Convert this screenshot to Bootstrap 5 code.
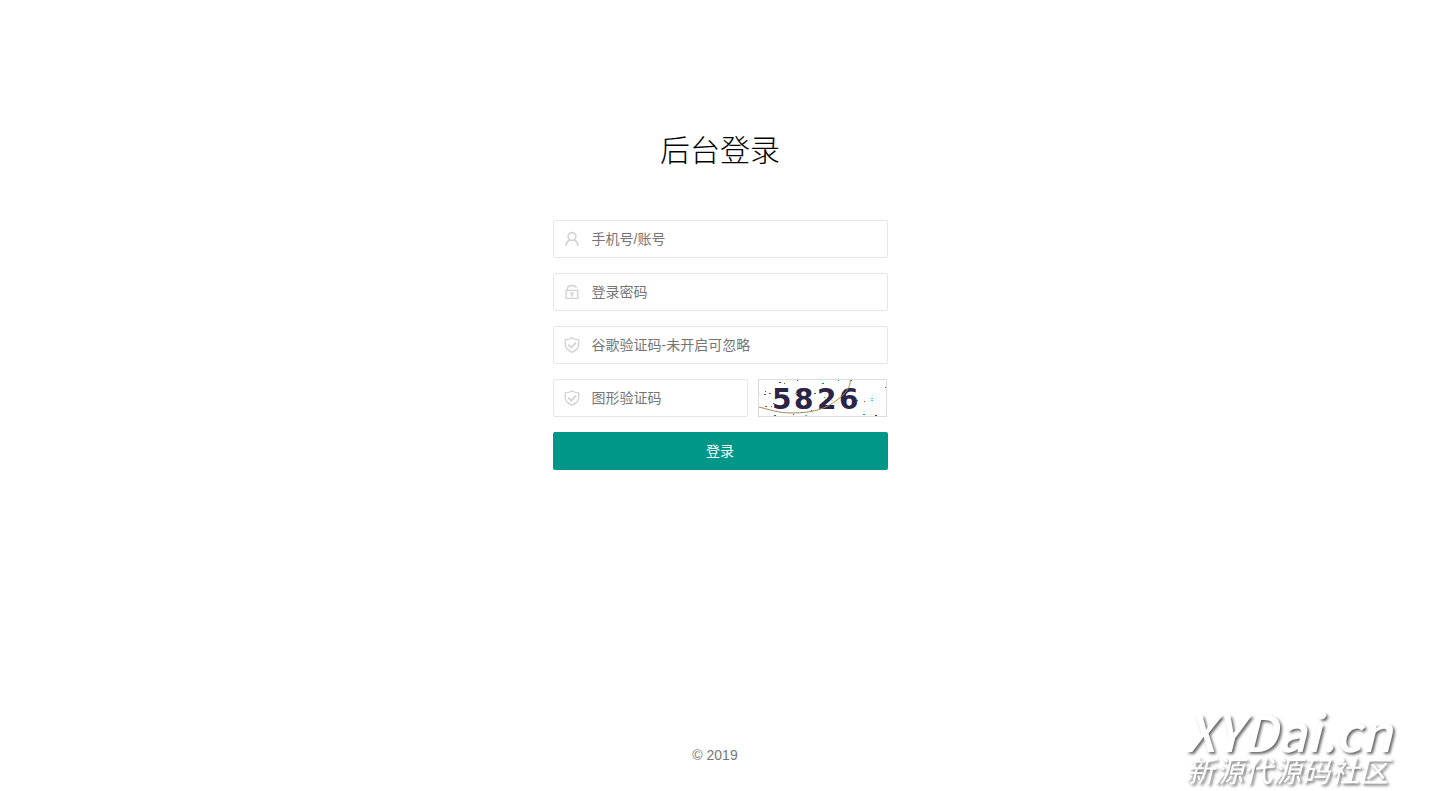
<!DOCTYPE html>
<html lang="zh-CN">
<head>
<meta charset="utf-8">
<meta name="viewport" content="width=device-width, initial-scale=1">
<title>后台登录</title>
<link href="https://cdn.jsdelivr.net/npm/bootstrap@5.3.0/dist/css/bootstrap.min.css" rel="stylesheet">
<style>
  body { font-family: "Liberation Sans", "Noto Sans CJK SC", sans-serif; font-size: 14px; line-height: 24px; color: #777; background: #fff; }
  .login-page { padding-top: 110px; }
  .login-panel { width: 100%; max-width: 375px; padding: 20px; }
  .login-title { font-size: 30px; line-height: 42px; font-weight: 300; color: #000; margin-bottom: 48px; }
  .login-form { gap: 15px; }
  .field { position: relative; }
  .field-icon { position: absolute; left: 1px; top: 1px; width: 37px; height: 36px; color: #d2d2d2; pointer-events: none; }
  .field .form-control { height: 38px; padding: 0 0 0 38px; font-size: 14px; border: 1px solid #e6e6e6; border-radius: 2px; color: #333; }
  .field .form-control::placeholder { color: #757575; opacity: 1; }
  .field .form-control:focus { border-color: #d2d2d2; box-shadow: none; }
  .captcha-row { gap: 10px; }
  .captcha { width: 130px; height: 38px; }
  .captcha svg { border: 1px solid #dcdcdc; width: 129px; height: 38px; }
  .btn-login { height: 38px; font-size: 14px; border-radius: 2px; background: #009688; color: #fff; }
  .btn-login:hover { background: #33ab9f; color: #fff; }
  .copyright { padding: 0 30px 24px 20px; }
  .watermark { position: fixed; right: 48px; bottom: 0; color: #fff; font-family: "Noto Sans CJK SC", sans-serif; font-style: italic; text-shadow: 2px 2px 3px rgba(0,0,0,.6); pointer-events: none; }
  .watermark-site { font-size: 50px; line-height: 44px; font-weight: 500; }
  .watermark-name { font-size: 29px; line-height: 34px; padding-bottom: 5px; }
</style>
</head>
<body>
<svg class="d-none" aria-hidden="true">
  <symbol id="shield" viewBox="0 0 16 18"><path d="M8 1.700C6.300 3 4 3.700 1.300 3.900v4.700c0 4 2.900 6.100 6.700 7.700 3.800-1.600 6.700-3.700 6.700-7.700V3.900C12 3.700 9.700 3 8 1.700z"/><path d="M4.300 8.600l3 3 4.800-5" stroke-width="1.700"/></symbol>
</svg>
<main class="login-page min-vh-100 d-flex flex-column align-items-center">
  <section class="login-panel">
    <h1 class="login-title text-center">后台登录</h1>
    <form class="login-form d-flex flex-column">
      <div class="field">
        <label class="field-icon d-flex align-items-center justify-content-center" for="account" aria-label="手机号/账号">
          <svg width="14" height="16" viewBox="0 0 14 16" fill="none" stroke="currentColor" stroke-width="1.600"><circle cx="7" cy="5.500" r="3.900"/><path d="M1.200 15c0-3 1.400-5 3.700-6.300M12.800 15c0-3-1.400-5-3.700-6.300"/></svg>
        </label>
        <input class="form-control" id="account" type="text" placeholder="手机号/账号">
      </div>
      <div class="field">
        <label class="field-icon d-flex align-items-center justify-content-center" for="password" aria-label="登录密码">
          <svg width="14" height="16" viewBox="0 0 14 16" fill="none" stroke="currentColor" stroke-width="1.400"><path d="M1.200 6.400h11.600v8H1.200zM2.500 6.400V5c0-2.200 1.800-3.500 4.500-3.500 2 0 3.800.7 4.500 2.600"/><path d="M5.200 9.300h3.600M7 9v3.500" stroke-width="1.600"/></svg>
        </label>
        <input class="form-control" id="password" type="password" placeholder="登录密码">
      </div>
      <div class="field">
        <label class="field-icon d-flex align-items-center justify-content-center" for="google" aria-label="谷歌验证码">
          <svg width="16" height="18" fill="none" stroke="currentColor" stroke-width="1.400"><use href="#shield"/></svg>
        </label>
        <input class="form-control" id="google" type="text" placeholder="谷歌验证码-未开启可忽略">
      </div>
      <div class="captcha-row d-flex">
        <div class="field flex-grow-1">
          <label class="field-icon d-flex align-items-center justify-content-center" for="vercode" aria-label="图形验证码">
            <svg width="16" height="18" fill="none" stroke="currentColor" stroke-width="1.400"><use href="#shield"/></svg>
          </label>
          <input class="form-control" id="vercode" type="text" placeholder="图形验证码">
        </div>
        <button class="captcha btn p-0 border-0 rounded-0 d-flex flex-shrink-0" type="button" aria-label="刷新验证码">
          <svg viewBox="0 0 127 36">
            <g fill="#2a2448" font-family="DejaVu Sans" font-weight="700" font-size="28"><text x="13 35 58 80" y="29">5826</text></g>
            <path d="M0 27c12 3 19 6 33 6 20 0 34-4 45-13 9-7 13-12 13.500-20" fill="none" stroke="#a58a5c"/>
            <g shape-rendering="crispEdges">
              <path d="M5 14h2v1H5zM20 2h2v1h-2zM6 11h1v1H6z" fill="#7a2a8a"/>
              <path d="M0 13h1v1H0zM73 20h1v1h-1z" fill="#ee2"/>
              <path d="M10 13h2v1h-2zM6 26h2v1H6zM105 21h1v1h-1z" fill="#935a22"/>
              <path d="M14 23h1v1h-1zM38 0h1v1h-1zM116 35h2v1h-2z" fill="#42f"/>
              <path d="M36 13h2v1h-2zM112 18h2v1h-2zM112 20h2v1h-2zM46 35h2v1h-2z" fill="#2dd"/>
              <path d="M63 3h2v1h-2zM65 17h1v1h-1zM104 34h2v1h-2z" fill="#0a5"/>
              <path d="M12 26h1v1h-1zM92 0h1v1h-1zM98 20h1v1h-1zM52 30h1v1h-1z" fill="#c15"/>
              <path d="M15 35h2v1h-2zM79 0h1v1h-1zM126 7h1v1h-1z" fill="#26b"/>
              <path d="M25 3h1v1h-1zM34 34h1v1h-1zM55 13h2v1h-2z" fill="#560"/>
            </g>
          </svg>
        </button>
      </div>
      <button class="btn btn-login border-0 p-0 w-100" type="submit">登录</button>
    </form>
  </section>
  <footer class="copyright mt-auto text-center">© 2019</footer>
</main>
<aside class="watermark">
  <div class="watermark-site">XYDai.cn</div>
  <div class="watermark-name">新源代源码社区</div>
</aside>
<script src="https://cdn.jsdelivr.net/npm/bootstrap@5.3.0/dist/js/bootstrap.bundle.min.js"></script>
</body>
</html>
